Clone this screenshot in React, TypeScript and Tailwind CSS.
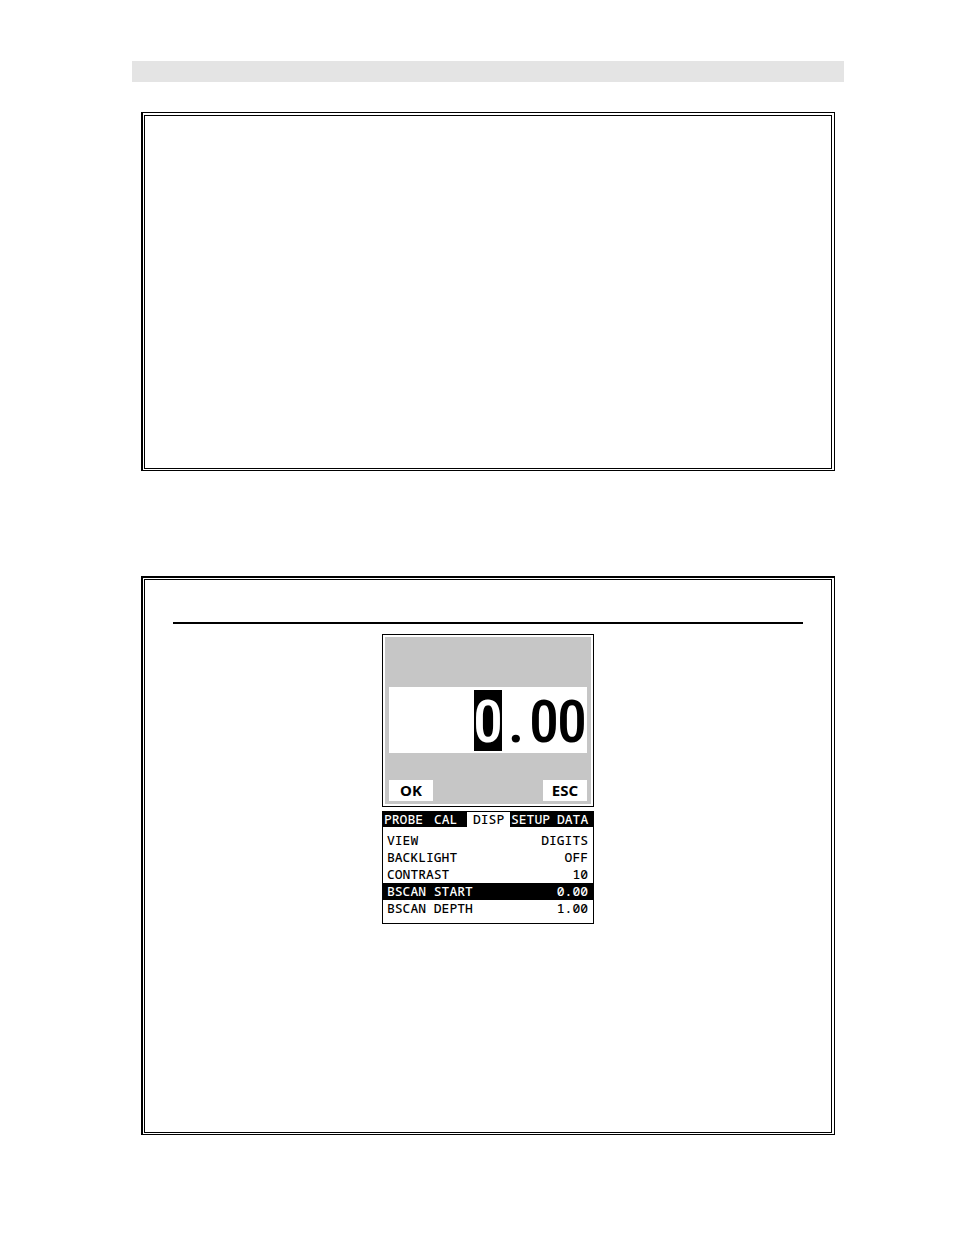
import React from "react";

type Setting = { label: string; value: string };

const tabs = [
  { name: "PROBE", style: "w-[42px] pl-px" },
  { name: "CAL", style: "w-[42px] pl-[9px]" },
  { name: "DISP", style: "w-[43px] pl-[6px]" },
  { name: "SETUP", style: "w-[46px] pl-px" },
  { name: "DATA", style: "flex-1 pl-px" },
];

const settings: Setting[] = [
  { label: "VIEW", value: "DIGITS" },
  { label: "BACKLIGHT", value: "OFF" },
  { label: "CONTRAST", value: "10" },
  { label: "BSCAN START", value: "0.00" },
  { label: "BSCAN DEPTH", value: "1.00" },
];

const digits = ["0", ".", "0", "0"];

function Readout() {
  return (
    <section aria-label="Value editor" className="border border-black p-[2px]">
      <div className="bg-[#c6c6c6] px-[4px] pt-[50px] pb-[3px]">
        <div className="flex h-[66px] justify-end bg-white pt-[3px] pr-px">
          {digits.map((digit, i) => (
            <span
              key={i}
              className={
                "flex h-[61px] w-[28px] justify-center text-[60px] leading-[63px] font-medium font-['Roboto_Condensed','Open_Sans_Condensed',sans-serif] " +
                (i === 0 ? "bg-black text-white" : "text-black")
              }
            >
              {digit}
            </span>
          ))}
        </div>
        <div className="mt-[27px] flex justify-between font-['Noto_Sans',sans-serif] text-[15px] leading-[21px] font-bold">
          <button type="button" className="h-[21px] w-[44px] bg-white">OK</button>
          <button type="button" className="h-[21px] w-[44px] bg-white">ESC</button>
        </div>
      </div>
    </section>
  );
}

function Menu() {
  return (
    <section
      aria-label="Display menu"
      className="mt-[4px] border border-black pb-[6px] font-['Noto_Sans_Mono','DejaVu_Sans_Mono',monospace] text-[13px] leading-[17px] font-medium"
    >
      <nav className="flex h-[15px] bg-black leading-[15px]">
        {tabs.map((tab) => (
          <button
            key={tab.name}
            type="button"
            className={
              "text-left " + tab.style + (tab.name === "DISP" ? " bg-white text-black" : " text-white")
            }
          >
            {tab.name}
          </button>
        ))}
      </nav>
      <table className="mt-[5px] w-full">
        <tbody>
          {settings.map((s) => (
            <tr key={s.label} className={s.label === "BSCAN START" ? "bg-black text-white" : "text-black"}>
              <th scope="row" className="p-0 pl-[4px] text-left font-medium">{s.label}</th>
              <td className="p-0 pr-[5px] text-right">{s.value}</td>
            </tr>
          ))}
        </tbody>
      </table>
    </section>
  );
}

export default function App() {
  return (
    <main className="min-h-screen bg-white pt-[61px] pr-[110px] pb-[100px] pl-[132px]">
      <header className="h-[21px] bg-[#e4e4e4]" />
      <div className="mx-[9px] mt-[30px] border border-l-2 border-black pt-[2px] pr-[2px] pb-px pl-px">
        <div className="h-[354px] border border-black" />
      </div>
      <div className="mx-[9px] mt-[105px] border border-t-2 border-l-2 border-black pt-px pr-[2px] pb-px pl-px">
        <div className="min-h-[554px] border border-black px-[28px] pt-[42px]">
          <hr className="border-t-2 border-black" />
          <div className="mx-auto mt-[10px] w-[212px]">
            <Readout />
            <Menu />
          </div>
        </div>
      </div>
    </main>
  );
}
